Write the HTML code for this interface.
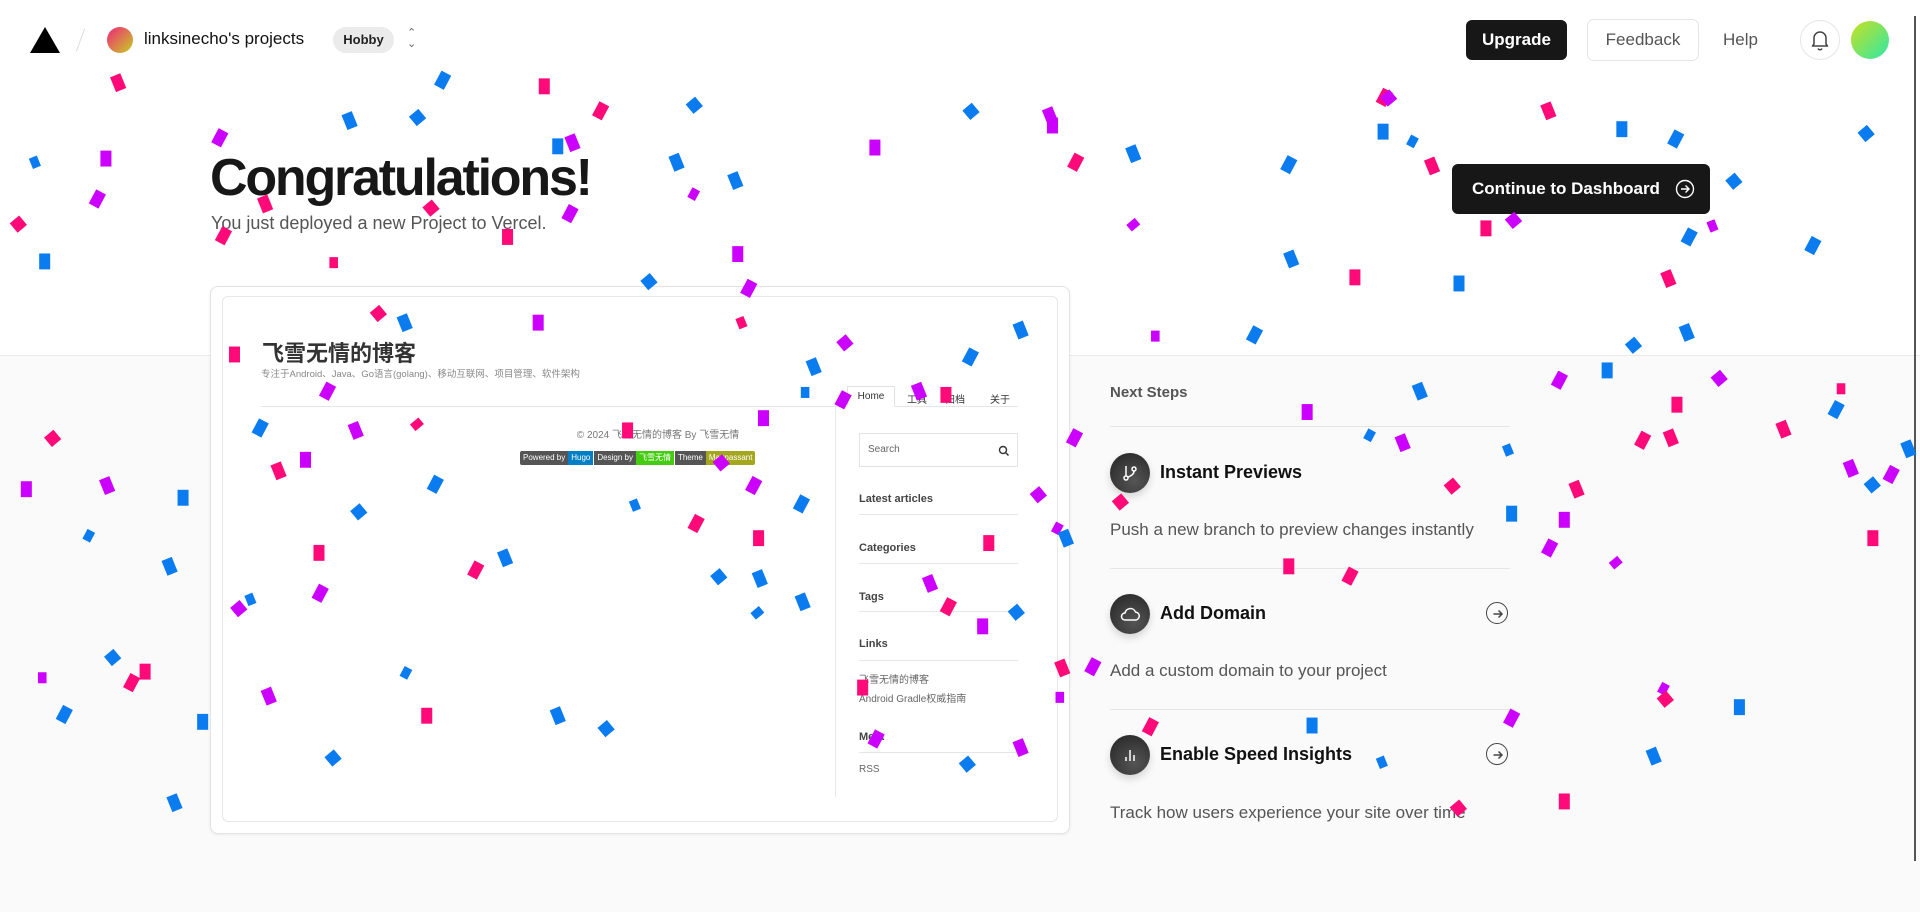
<!DOCTYPE html>
<html><head><meta charset="utf-8"><style>
*{box-sizing:border-box;margin:0;padding:0}
body{width:1920px;height:912px;overflow:hidden;background:#fff;font-family:"Liberation Sans","Noto Sans CJK SC",sans-serif;position:relative;color:#171717}
.abs{position:absolute}
.gray{position:absolute;left:0;top:355px;width:1920px;height:557px;background:#fafafa;border-top:1px solid #eaeaea}
.scroll{position:absolute;left:1914px;top:16px;width:2px;height:845px;background:#555}
.btnd{background:#171717;color:#fff;border-radius:6px;font-weight:bold}
.c{position:absolute;width:9px;height:13px}
.c:nth-child(3n){transform:rotate(28deg)}
.c:nth-child(3n+1){transform:rotate(-22deg)}
.c:nth-child(5n){transform:rotate(50deg);width:10px;height:10px}
.c:nth-child(7n){width:7px;height:9px}
.p{background:#ff0a78}.b{background:#0a7cf0}.u{background:#cc00ff}
.side h4{position:absolute;left:859px;font-size:11px;font-weight:bold;color:#444}
.side .ln{position:absolute;left:859px;width:159px;height:1px;background:#e6e6e6}
.step h3{position:absolute;left:1160px;font-size:18px;font-weight:bold;color:#111}
.step p{position:absolute;left:1110px;font-size:17px;color:#555}
.ico{position:absolute;left:1110px;width:40px;height:40px;border-radius:50%;background:radial-gradient(circle at 60% 70%,#555,#222);box-shadow:0 4px 8px rgba(0,0,0,.15)}
.sep{position:absolute;left:1110px;width:400px;height:1px;background:#e5e5e5}
.arr{position:absolute;left:1486px;width:22px;height:22px;border:1.5px solid #444;border-radius:50%}
</style></head><body>
<div class="gray"></div>
<div class="scroll"></div>
<!-- header -->
<svg class="abs" style="left:30px;top:27px" width="30" height="26"><polygon points="15,0 30,26 0,26" fill="#000"/></svg>
<div class="abs" style="left:80px;top:28px;width:1px;height:24px;background:#ddd;transform:rotate(20deg)"></div>
<div class="abs" style="left:107px;top:27px;width:26px;height:26px;border-radius:50%;background:linear-gradient(135deg,#f0237d,#c7d020)"></div>
<div class="abs" style="left:144px;top:29px;font-size:17px;color:#111">linksinecho's projects</div>
<div class="abs" style="left:333px;top:27px;width:61px;height:26px;border-radius:13px;background:#ebebeb;font-size:13px;font-weight:bold;text-align:center;line-height:26px;color:#222">Hobby</div>
<div class="abs" style="left:407px;top:28px;font-size:11px;color:#666;line-height:11px">&#8963;<br>&#8964;</div>
<div class="abs btnd" style="left:1466px;top:20px;width:101px;height:40px;font-size:17px;text-align:center;line-height:40px">Upgrade</div>
<div class="abs" style="left:1587px;top:19px;width:112px;height:42px;border:1px solid #e5e5e5;border-radius:7px;font-size:17px;text-align:center;line-height:40px;color:#555">Feedback</div>
<div class="abs" style="left:1723px;top:30px;font-size:17px;color:#555">Help</div>
<div class="abs" style="left:1800px;top:20px;width:40px;height:40px;border:1px solid #e5e5e5;border-radius:50%"></div>
<svg class="abs" style="left:1810px;top:29px" width="20" height="22" viewBox="0 0 20 22"><path d="M4 15V9a6 6 0 0 1 12 0v6l1.5 2h-15z M8 19.5a2.2 2.2 0 0 0 4 0" fill="none" stroke="#444" stroke-width="1.5" stroke-linejoin="round"/></svg>
<div class="abs" style="left:1851px;top:21px;width:38px;height:38px;border-radius:50%;background:linear-gradient(135deg,#c9e020,#2ee8a8)"></div>
<!-- hero -->
<div class="abs" style="left:210px;top:148px;font-size:52px;font-weight:bold;letter-spacing:-2.2px;color:#171717">Congratulations!</div>
<div class="abs" style="left:211px;top:213px;font-size:18px;color:#555">You just deployed a new Project to Vercel.</div>
<div class="abs btnd" style="left:1452px;top:164px;width:258px;height:50px;font-size:17px;line-height:50px;padding-left:20px;font-weight:600">Continue to Dashboard</div>
<svg class="abs" style="left:1675px;top:179px" width="20" height="20"><circle cx="10" cy="10" r="8.5" fill="none" stroke="#fff" stroke-width="1.4"/><path d="M6 10h8M10.5 6.5 14 10l-3.5 3.5" fill="none" stroke="#fff" stroke-width="1.4"/></svg>
<!-- preview card -->
<div class="abs" style="left:210px;top:286px;width:860px;height:548px;border:1px solid #e3e3e3;border-radius:8px;background:#fff;box-shadow:0 1px 3px rgba(0,0,0,.06)"></div>
<div class="abs" style="left:222px;top:296px;width:836px;height:526px;border:1px solid #e8e8e8;border-radius:6px;background:#fff"></div>
<div class="abs" style="left:262px;top:336px;font-size:22px;font-weight:bold;color:#333">飞雪无情的博客</div>
<div class="abs" style="left:261px;top:366px;font-size:9.5px;color:#888">专注于Android、Java、Go语言(golang)、移动互联网、项目管理、软件架构</div>
<div class="abs" style="left:261px;top:406px;width:757px;height:1px;background:#e5e5e5"></div>
<div class="abs" style="left:847px;top:386px;width:48px;height:21px;border:1px solid #e2e2e2;border-bottom:1px solid #fff;background:#fff;font-size:10px;text-align:center;line-height:19px;color:#333">Home</div>
<div class="abs" style="left:907px;top:391px;font-size:10px;color:#333">工具</div>
<div class="abs" style="left:945px;top:391px;font-size:10px;color:#333">归档</div>
<div class="abs" style="left:990px;top:391px;font-size:10px;color:#333">关于</div>
<div class="abs" style="left:835px;top:407px;width:1px;height:390px;background:#e8e8e8"></div>
<div class="abs" style="left:508px;top:426px;width:300px;text-align:center;font-size:10px;color:#777">© 2024 飞雪无情的博客 By 飞雪无情</div>
<div class="abs" style="left:520px;top:451px;height:14px;font-size:8px;color:#fff;line-height:14px;display:flex;border-radius:2px;overflow:hidden">
<span style="background:#555;padding:0 3px">Powered by</span><span style="background:#007ec6;padding:0 3px">Hugo</span><span style="background:#555;padding:0 3px;margin-left:1px">Design by</span><span style="background:#4c1;padding:0 3px">飞雪无情</span><span style="background:#555;padding:0 3px;margin-left:1px">Theme</span><span style="background:#a4a61d;padding:0 3px">Maupassant</span></div>
<div class="side">
<div class="abs" style="left:859px;top:433px;width:159px;height:34px;border:1px solid #e3e3e3;font-size:10px;color:#666;line-height:32px;padding-left:8px">Search</div>
<svg class="abs" style="left:998px;top:445px" width="12" height="12"><circle cx="5" cy="5" r="3.5" fill="none" stroke="#333" stroke-width="1.4"/><path d="M7.5 7.5 10.5 10.5" stroke="#333" stroke-width="1.5"/></svg>
<h4 style="top:493px">Latest articles</h4><div class="ln" style="top:514px"></div>
<h4 style="top:542px">Categories</h4><div class="ln" style="top:563px"></div>
<h4 style="top:591px">Tags</h4><div class="ln" style="top:611px"></div>
<h4 style="top:638px">Links</h4><div class="ln" style="top:660px"></div>
<div class="abs" style="left:859px;top:671px;font-size:10px;color:#666">飞雪无情的博客</div>
<div class="abs" style="left:859px;top:690px;font-size:10px;color:#666">Android Gradle权威指南</div>
<h4 style="top:731px">Meta</h4><div class="ln" style="top:752px"></div>
<div class="abs" style="left:859px;top:764px;font-size:10px;color:#666">RSS</div>
</div>
<!-- next steps -->
<div class="abs" style="left:1110px;top:384px;font-size:15px;font-weight:bold;color:#555">Next Steps</div>
<div class="sep" style="top:426px"></div>
<div class="step">
<div class="ico" style="top:453px"></div>
<svg class="abs" style="left:1120px;top:463px" width="20" height="20" viewBox="0 0 20 20" fill="none" stroke="#fff" stroke-width="1.5"><circle cx="6" cy="15" r="2"/><circle cx="14" cy="6" r="2"/><path d="M6 3v10M14 8c0 4-4 5-6.5 6.5"/></svg>
<h3 style="top:462px">Instant Previews</h3>
<p style="top:520px">Push a new branch to preview changes instantly</p>
<div class="sep" style="top:568px"></div>
<div class="ico" style="top:594px"></div>
<svg class="abs" style="left:1119px;top:603px" width="22" height="22" viewBox="0 0 22 22" fill="none" stroke="#fff" stroke-width="1.5"><path d="M6 17h10a4 4 0 0 0 .5-8 5.5 5.5 0 0 0-10.5 1A3.5 3.5 0 0 0 6 17z"/></svg>
<h3 style="top:603px">Add Domain</h3>
<div class="arr" style="top:602px"></div>
<svg class="abs" style="left:1490px;top:606px" width="16" height="16" viewBox="0 0 16 16" fill="none" stroke="#444" stroke-width="1.5"><path d="M3.5 8h8.5M8.5 4.5 12 8l-3.5 3.5"/></svg>
<p style="top:661px">Add a custom domain to your project</p>
<div class="sep" style="top:709px"></div>
<div class="ico" style="top:735px"></div>
<svg class="abs" style="left:1120px;top:745px" width="20" height="20" viewBox="0 0 20 20" fill="none" stroke="#fff" stroke-width="1.5"><path d="M6 16v-4M10 16V5M14 16v-6"/></svg>
<h3 style="top:744px">Enable Speed Insights</h3>
<div class="arr" style="top:743px"></div>
<svg class="abs" style="left:1490px;top:747px" width="16" height="16" viewBox="0 0 16 16" fill="none" stroke="#444" stroke-width="1.5"><path d="M3.5 8h8.5M8.5 4.5 12 8l-3.5 3.5"/></svg>
<p style="top:803px">Track how users experience your site over time</p>
</div>
<!-- confetti -->
<div class="abs" style="left:0;top:0;width:1568px;height:745px;transform:scale(1.2245);transform-origin:0 0">
<i class="c p" style="left:92px;top:61px"></i><i class="c p" style="left:440px;top:64px"></i><i class="c b" style="left:357px;top:59px"></i><i class="c b" style="left:281px;top:92px"></i><i class="c b" style="left:336px;top:91px"></i><i class="c u" style="left:175px;top:106px"></i><i class="c b" style="left:25px;top:128px"></i><i class="c u" style="left:82px;top:123px"></i><i class="c u" style="left:75px;top:156px"></i><i class="c p" style="left:10px;top:178px"></i><i class="c b" style="left:32px;top:207px"></i><i class="c p" style="left:178px;top:186px"></i><i class="c p" style="left:212px;top:160px"></i><i class="c p" style="left:269px;top:210px"></i><i class="c p" style="left:347px;top:165px"></i><i class="c u" style="left:463px;top:110px"></i><i class="c b" style="left:451px;top:113px"></i><i class="c p" style="left:486px;top:84px"></i><i class="c b" style="left:548px;top:126px"></i><i class="c b" style="left:562px;top:81px"></i><i class="c u" style="left:563px;top:154px"></i><i class="c b" style="left:596px;top:141px"></i><i class="c p" style="left:410px;top:187px"></i><i class="c u" style="left:461px;top:168px"></i><i class="c b" style="left:525px;top:225px"></i><i class="c u" style="left:598px;top:201px"></i><i class="c u" style="left:607px;top:229px"></i><i class="c p" style="left:602px;top:259px"></i><i class="c u" style="left:710px;top:114px"></i><i class="c b" style="left:788px;top:86px"></i><i class="c u" style="left:853px;top:88px"></i><i class="c u" style="left:855px;top:96px"></i><i class="c p" style="left:874px;top:126px"></i><i class="c b" style="left:921px;top:119px"></i><i class="c u" style="left:922px;top:179px"></i><i class="c b" style="left:1048px;top:128px"></i><i class="c b" style="left:1050px;top:205px"></i><i class="c p" style="left:1102px;top:220px"></i><i class="c p" style="left:1126px;top:73px"></i><i class="c u" style="left:1129px;top:75px"></i><i class="c b" style="left:1125px;top:101px"></i><i class="c b" style="left:1150px;top:111px"></i><i class="c p" style="left:1165px;top:129px"></i><i class="c p" style="left:1209px;top:180px"></i><i class="c u" style="left:1231px;top:175px"></i><i class="c p" style="left:1260px;top:84px"></i><i class="c b" style="left:1320px;top:99px"></i><i class="c b" style="left:1364px;top:107px"></i><i class="c u" style="left:1395px;top:180px"></i><i class="c b" style="left:1411px;top:143px"></i><i class="c b" style="left:1375px;top:187px"></i><i class="c p" style="left:1358px;top:221px"></i><i class="c b" style="left:1187px;top:225px"></i><i class="c b" style="left:1476px;top:194px"></i><i class="c b" style="left:1519px;top:104px"></i><i class="c u" style="left:940px;top:270px"></i><i class="c b" style="left:1020px;top:267px"></i><i class="c b" style="left:1373px;top:265px"></i><i class="c b" style="left:1308px;top:296px"></i><i class="c b" style="left:1329px;top:277px"></i><i class="c b" style="left:1155px;top:313px"></i><i class="c u" style="left:1063px;top:330px"></i><i class="c b" style="left:1115px;top:351px"></i><i class="c u" style="left:1141px;top:355px"></i><i class="c p" style="left:1181px;top:392px"></i><i class="c u" style="left:1269px;top:304px"></i><i class="c p" style="left:1283px;top:393px"></i><i class="c u" style="left:1273px;top:418px"></i><i class="c u" style="left:1261px;top:441px"></i><i class="c u" style="left:1316px;top:455px"></i><i class="c b" style="left:1230px;top:413px"></i><i class="c p" style="left:1337px;top:353px"></i><i class="c p" style="left:1360px;top:351px"></i><i class="c p" style="left:1365px;top:324px"></i><i class="c u" style="left:1399px;top:304px"></i><i class="c p" style="left:1452px;top:344px"></i><i class="c p" style="left:1500px;top:313px"></i><i class="c b" style="left:1495px;top:328px"></i><i class="c u" style="left:1507px;top:376px"></i><i class="c b" style="left:1524px;top:391px"></i><i class="c u" style="left:1540px;top:381px"></i><i class="c b" style="left:1554px;top:360px"></i><i class="c p" style="left:1525px;top:433px"></i><i class="c u" style="left:1355px;top:558px"></i><i class="c p" style="left:1355px;top:566px"></i><i class="c b" style="left:1416px;top:571px"></i><i class="c u" style="left:1230px;top:580px"></i><i class="c b" style="left:1346px;top:611px"></i><i class="c p" style="left:1273px;top:648px"></i><i class="c p" style="left:1186px;top:655px"></i><i class="c b" style="left:1125px;top:618px"></i><i class="c b" style="left:1067px;top:586px"></i><i class="c p" style="left:935px;top:587px"></i><i class="c u" style="left:829px;top:604px"></i><i class="c b" style="left:785px;top:619px"></i><i class="c u" style="left:711px;top:597px"></i><i class="c p" style="left:863px;top:539px"></i><i class="c u" style="left:862px;top:565px"></i><i class="c u" style="left:888px;top:538px"></i><i class="c b" style="left:825px;top:495px"></i><i class="c u" style="left:798px;top:505px"></i><i class="c p" style="left:770px;top:489px"></i><i class="c u" style="left:755px;top:470px"></i><i class="c p" style="left:700px;top:555px"></i><i class="c b" style="left:615px;top:496px"></i><i class="c b" style="left:651px;top:485px"></i><i class="c p" style="left:615px;top:433px"></i><i class="c b" style="left:650px;top:405px"></i><i class="c b" style="left:616px;top:466px"></i><i class="c b" style="left:582px;top:466px"></i><i class="c p" style="left:564px;top:421px"></i><i class="c b" style="left:515px;top:408px"></i><i class="c p" style="left:508px;top:345px"></i><i class="c u" style="left:611px;top:390px"></i><i class="c u" style="left:584px;top:373px"></i><i class="c u" style="left:619px;top:335px"></i><i class="c u" style="left:684px;top:320px"></i><i class="c b" style="left:660px;top:293px"></i><i class="c b" style="left:654px;top:316px"></i><i class="c u" style="left:685px;top:275px"></i><i class="c u" style="left:746px;top:313px"></i><i class="c p" style="left:768px;top:316px"></i><i class="c b" style="left:788px;top:285px"></i><i class="c b" style="left:829px;top:263px"></i><i class="c u" style="left:843px;top:399px"></i><i class="c u" style="left:860px;top:427px"></i><i class="c b" style="left:866px;top:433px"></i><i class="c p" style="left:803px;top:437px"></i><i class="c u" style="left:873px;top:351px"></i><i class="c p" style="left:910px;top:405px"></i><i class="c p" style="left:1048px;top:456px"></i><i class="c p" style="left:1098px;top:464px"></i><i class="c b" style="left:1228px;top:363px"></i><i class="c u" style="left:435px;top:257px"></i><i class="c p" style="left:304px;top:251px"></i><i class="c b" style="left:326px;top:257px"></i><i class="c p" style="left:187px;top:283px"></i><i class="c u" style="left:263px;top:313px"></i><i class="c u" style="left:286px;top:345px"></i><i class="c p" style="left:337px;top:342px"></i><i class="c b" style="left:208px;top:343px"></i><i class="c p" style="left:223px;top:378px"></i><i class="c u" style="left:245px;top:369px"></i><i class="c b" style="left:351px;top:389px"></i><i class="c b" style="left:288px;top:413px"></i><i class="c b" style="left:145px;top:400px"></i><i class="c b" style="left:69px;top:433px"></i><i class="c u" style="left:83px;top:390px"></i><i class="c u" style="left:17px;top:393px"></i><i class="c p" style="left:38px;top:353px"></i><i class="c b" style="left:134px;top:456px"></i><i class="c p" style="left:256px;top:445px"></i><i class="c u" style="left:257px;top:478px"></i><i class="c b" style="left:201px;top:485px"></i><i class="c u" style="left:190px;top:492px"></i><i class="c p" style="left:384px;top:459px"></i><i class="c b" style="left:408px;top:449px"></i><i class="c p" style="left:114px;top:542px"></i><i class="c p" style="left:103px;top:551px"></i><i class="c b" style="left:87px;top:532px"></i><i class="c u" style="left:31px;top:549px"></i><i class="c b" style="left:48px;top:577px"></i><i class="c u" style="left:215px;top:562px"></i><i class="c b" style="left:161px;top:583px"></i><i class="c b" style="left:267px;top:614px"></i><i class="c b" style="left:138px;top:649px"></i><i class="c p" style="left:344px;top:578px"></i><i class="c b" style="left:328px;top:545px"></i><i class="c b" style="left:451px;top:578px"></i><i class="c b" style="left:490px;top:590px"></i>
</div>
</body></html>
